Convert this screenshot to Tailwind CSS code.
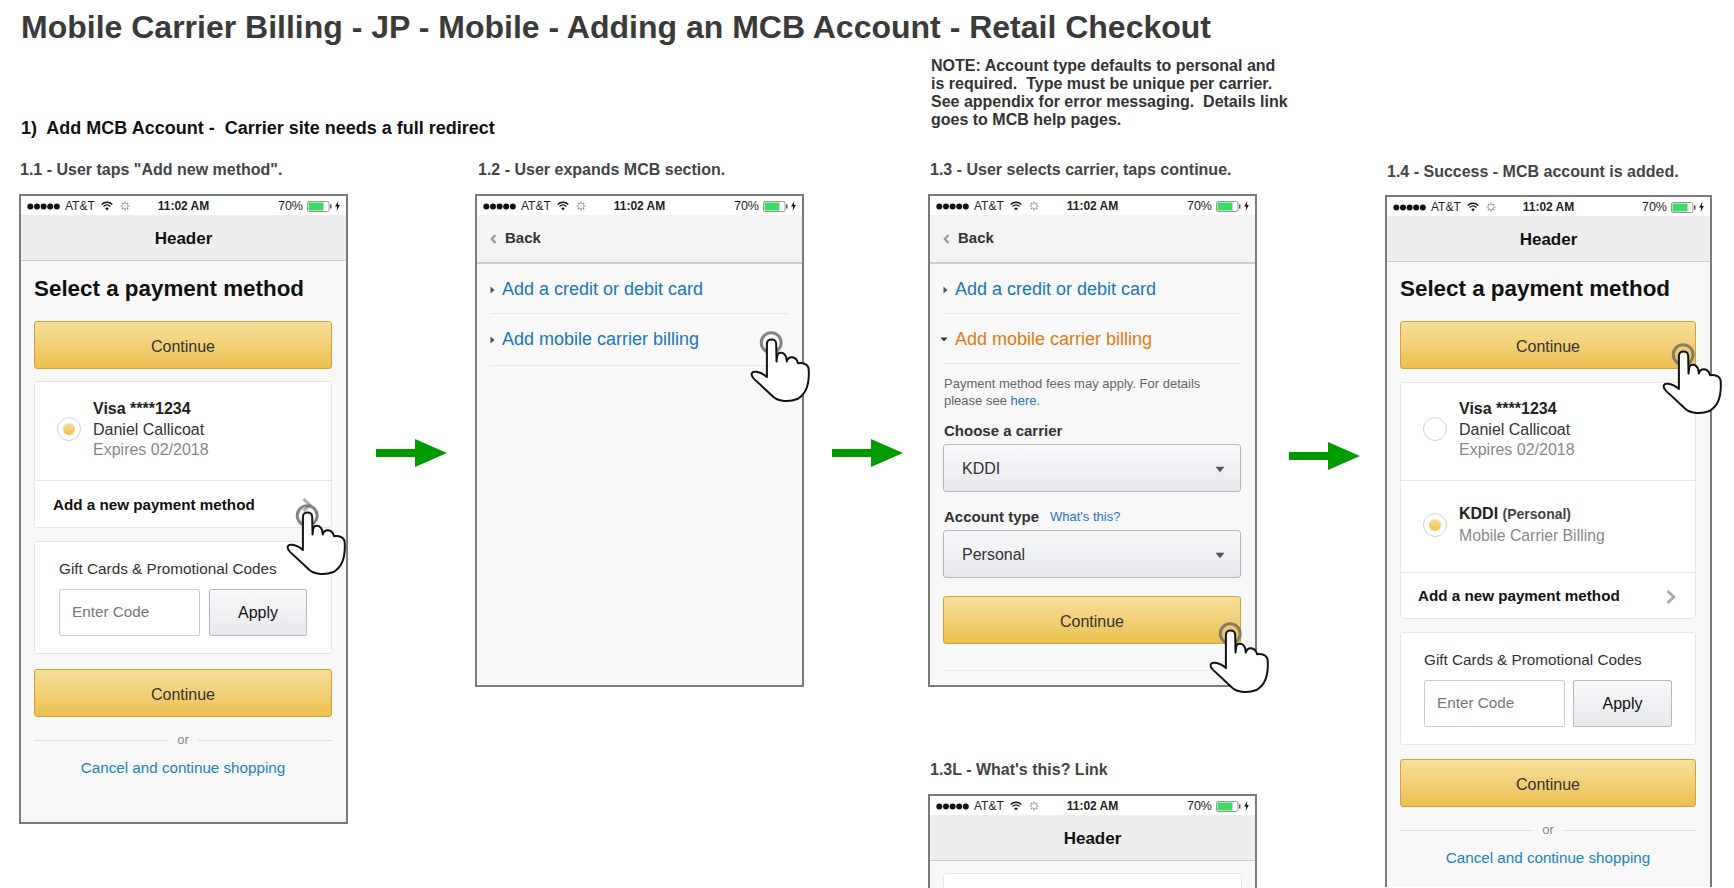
<!DOCTYPE html>
<html lang="en">
<head>
    <meta charset="utf-8">
    <title>Mobile Carrier Billing - JP</title>
    <script src="https://cdn.jsdelivr.net/npm/@tailwindcss/browser@4"></script>
</head>
<body class="h-[888px] overflow-hidden bg-white font-['Liberation_Sans',Arial,sans-serif] text-[#333]">
    <!-- shared icons -->
    <svg class="hidden">
        <symbol id="hand" viewBox="48 70 182 220">
            <circle cx="111" cy="108" r="30" fill="none" stroke="#6f6f6f" stroke-opacity="0.85" stroke-width="9"/>
            <path d="M98 192 L98 112 C98 94 126 94 126 112 L127 165 L129 148 C132 134 150 136 156 152 L158 165 C162 148 185 146 192 170 C205 168 224 172 224 190 C226 225 220 262 190 278 C165 288 135 286 118 272 L60 218 C46 204 52 194 66 196 C78 198 90 204 98 212 Z" fill="#fff" stroke="#111" stroke-width="6" stroke-linejoin="round"/>
        </symbol>
        <symbol id="dots" viewBox="0 0 33 7">
            <circle cx="3.3" cy="3.5" r="3" fill="#111"/><circle cx="10" cy="3.5" r="3" fill="#111"/><circle cx="16.6" cy="3.5" r="3" fill="#111"/><circle cx="23.2" cy="3.5" r="3" fill="#111"/><circle cx="29.8" cy="3.5" r="3" fill="#111"/>
        </symbol>
        <symbol id="wifi" viewBox="0 0 12 10">
            <path d="M0.7 3.4 C3.7 0.6 8.3 0.6 11.3 3.4 M2.6 5.4 C4.6 3.6 7.4 3.6 9.4 5.4" fill="none" stroke="#111" stroke-width="1.4"/>
            <path d="M4.2 7.2 C5.2 6.4 6.8 6.4 7.8 7.2 L6 9.4 Z" fill="#111"/>
        </symbol>
        <symbol id="spinner" viewBox="0 0 10 10">
            <path d="M5 0.5 V3 M5 7 V9.5 M0.5 5 H3 M7 5 H9.5 M1.8 1.8 L3.5 3.5 M6.5 6.5 L8.2 8.2 M8.2 1.8 L6.5 3.5 M3.5 6.5 L1.8 8.2" stroke="#888" stroke-width="1.2"/>
        </symbol>
        <symbol id="battery" viewBox="0 0 25 11">
            <rect x="0.5" y="0.5" width="21.5" height="10" rx="1.5" fill="#fff" stroke="#999"/>
            <rect x="1.5" y="1.5" width="15" height="8" fill="#3ddb65"/>
            <rect x="23" y="3.5" width="1.5" height="4" fill="#555"/>
        </symbol>
        <symbol id="bolt" viewBox="0 0 5 10">
            <path d="M3.2 0 L0.2 5.6 H2.2 L1.6 10 L4.8 4 H2.8 Z" fill="#111"/>
        </symbol>
        <symbol id="chevron" viewBox="0 0 10 14">
            <path d="M1.5 1 L8 7 L1.5 13" fill="none" stroke="#aaa" stroke-width="2.8"/>
        </symbol>
        <symbol id="back" viewBox="0 0 7 10">
            <path d="M5.5 1 L1.8 5 L5.5 9" fill="none" stroke="#999" stroke-width="2.2"/>
        </symbol>
        <symbol id="tri-right" viewBox="0 0 5 8">
            <path d="M0.5 0.5 L4.5 4 L0.5 7.5 Z" fill="#555"/>
        </symbol>
        <symbol id="tri-down" viewBox="0 0 8 5">
            <path d="M0.5 0.5 H7.5 L4 4.5 Z" fill="#333"/>
        </symbol>
        <symbol id="caret" viewBox="0 0 9 6">
            <path d="M0.5 0.5 H8.5 L4.5 5.5 Z" fill="#555"/>
        </symbol>
        <symbol id="arrow" viewBox="0 0 71 28">
            <path d="M0 10 H39 V0 L71 14 L39 28 V18 H0 Z" fill="#009b00"/>
        </symbol>
    </svg>

    <h1 class="h-[54px] pl-[21px] text-[32px] leading-[54px] font-bold whitespace-nowrap text-[#3a3a3a]">Mobile Carrier Billing - JP - Mobile - Adding an MCB Account - Retail Checkout</h1>

    <div class="flex items-start pl-[19px]">
        <!-- 1.1 -->
        <div class="flex w-[329px] shrink-0 flex-col">
            <h2 class="mt-[64px] ml-[2px] text-[18px] leading-[20px] font-bold whitespace-pre text-[#111]">1)  Add MCB Account -  Carrier site needs a full redirect</h2>
            <p class="mt-[22px] ml-[1px] text-[16px] leading-[20px] font-bold whitespace-nowrap text-[#444]">1.1 - User taps "Add new method".</p>
            <div class="relative mt-[14px] h-[630px] border-2 border-[#7b7b7b] bg-[#f8f8f8]">
                <div class="grid h-[19px] grid-cols-[1fr_auto_1fr] items-center bg-white px-[6px] text-[12px] leading-[19px] text-[#222]">
                    <div class="flex items-center"><svg class="h-[7px] w-[33px]"><use href="#dots"/></svg><span class="ml-[5px]">AT&amp;T</span><svg class="ml-[6px] h-[10px] w-[12px]"><use href="#wifi"/></svg><svg class="ml-[7px] h-[10px] w-[10px]"><use href="#spinner"/></svg></div>
                    <div class="font-bold">11:02 AM</div>
                    <div class="flex items-center justify-end"><span class="pt-[1px] text-[12.5px]">70%</span><svg class="ml-[4px] h-[11px] w-[25px]"><use href="#battery"/></svg><svg class="ml-[3px] h-[10px] w-[5px]"><use href="#bolt"/></svg></div>
                </div>
                <div class="flex h-[46px] items-center justify-center border-b border-[#ccc] bg-[#eee] pt-[2px] text-[17px] font-bold text-[#111]">Header</div>
                <div class="pr-[14px] pl-[13px]">
                    <h3 class="mt-[14px] text-[22.4px] leading-[28px] font-bold text-[#111]">Select a payment method</h3>
                    <div class="mt-[18px] flex h-[48px] items-center justify-center rounded-[3px] border border-[#cfa337] bg-linear-to-b from-[#f6df9a] to-[#edc04d] pt-[4px] text-[16px] text-[#333]">Continue</div>
                    <div class="mt-[12px] h-[147px] rounded-[3px] border border-[#e6e6e6] bg-white">
                        <div class="flex h-[99px] border-b border-[#e6e6e6] pt-[17px] pl-[22px]">
                            <div class="mt-[18px] flex h-[24px] w-[24px] items-center justify-center rounded-full border border-[#d0d0d0] bg-white"><div class="h-[12px] w-[12px] rounded-full bg-linear-to-b from-[#f6df9a] to-[#edc04d]"></div></div>
                            <div class="ml-[12px] text-[16px] leading-[20.5px]">
                                <div class="font-bold text-[#222]">Visa ****1234</div>
                                <div>Daniel Callicoat</div>
                                <div class="text-[#888]">Expires 02/2018</div>
                            </div>
                        </div>
                        <div class="flex h-[46px] items-center justify-between pt-[2px] pr-[19px] pl-[18px]">
                            <span class="text-[15.2px] font-bold text-[#111]">Add a new payment method</span>
                            <svg class="h-[14px] w-[10px]"><use href="#chevron"/></svg>
                        </div>
                    </div>
                    <div class="mt-[13px] h-[113px] rounded-[3px] border border-[#e6e6e6] bg-white pt-[17px] pl-[24px]">
                        <div class="text-[15.3px] leading-[20px] text-[#333]">Gift Cards &amp; Promotional Codes</div>
                        <div class="mt-[10px] flex gap-[9px]">
                            <div class="flex h-[47px] w-[141px] items-center rounded-[2px] border border-[#ccc] bg-white pl-[12px] text-[15.3px] text-[#777]">Enter Code</div>
                            <div class="flex h-[47px] w-[98px] items-center justify-center rounded-[2px] border border-[#b5b8be] bg-linear-to-b from-[#f7f8fa] to-[#e7e9ec] text-[16px] text-[#111]">Apply</div>
                        </div>
                    </div>
                    <div class="mt-[15px] flex h-[48px] items-center justify-center rounded-[3px] border border-[#cfa337] bg-linear-to-b from-[#f6df9a] to-[#edc04d] pt-[4px] text-[16px] text-[#333]">Continue</div>
                    <div class="mt-[15px] flex items-center gap-[9px] text-[13px] leading-[16px] text-[#888]"><div class="h-px flex-1 bg-[#ddd]"></div>or<div class="h-px flex-1 bg-[#ddd]"></div></div>
                    <div class="mt-[10px] text-center text-[15.2px] leading-[20px] text-[#1a83c1]">Cancel and continue shopping</div>
                </div>
                <svg class="absolute top-[307px] left-[265px] h-[73px] w-[61px]"><use href="#hand"/></svg>
            </div>
        </div>

        <svg class="mt-[385px] ml-[28px] h-[28px] w-[71px] shrink-0"><use href="#arrow"/></svg>

        <!-- 1.2 -->
        <div class="ml-[28px] flex w-[329px] shrink-0 flex-col">
            <p class="mt-[106px] ml-[3px] text-[16px] leading-[20px] font-bold whitespace-nowrap text-[#444]">1.2 - User expands MCB section.</p>
            <div class="relative mt-[14px] h-[493px] border-2 border-[#7b7b7b] bg-[#f8f8f8]">
                <div class="grid h-[19px] grid-cols-[1fr_auto_1fr] items-center bg-white px-[6px] text-[12px] leading-[19px] text-[#222]">
                    <div class="flex items-center"><svg class="h-[7px] w-[33px]"><use href="#dots"/></svg><span class="ml-[5px]">AT&amp;T</span><svg class="ml-[6px] h-[10px] w-[12px]"><use href="#wifi"/></svg><svg class="ml-[7px] h-[10px] w-[10px]"><use href="#spinner"/></svg></div>
                    <div class="font-bold">11:02 AM</div>
                    <div class="flex items-center justify-end"><span class="pt-[1px] text-[12.5px]">70%</span><svg class="ml-[4px] h-[11px] w-[25px]"><use href="#battery"/></svg><svg class="ml-[3px] h-[10px] w-[5px]"><use href="#bolt"/></svg></div>
                </div>
                <div class="flex h-[49px] items-center border-b-2 border-[#ccc] bg-[#f3f3f3] pl-[13px] text-[15px] font-bold text-[#333]"><svg class="h-[10px] w-[7px]"><use href="#back"/></svg><span class="ml-[8px]">Back</span></div>
                <div class="pr-[14px] pl-[13px]">
                    <div class="flex h-[50px] items-center border-b border-[#e6e6e6] pt-[2px] text-[18px] text-[#1a76bb]"><svg class="h-[8px] w-[5px]"><use href="#tri-right"/></svg><span class="ml-[7px]">Add a credit or debit card</span></div>
                    <div class="flex h-[52px] items-center border-b border-[#e6e6e6] text-[18px] text-[#1a76bb]"><svg class="h-[8px] w-[5px]"><use href="#tri-right"/></svg><span class="ml-[7px]">Add mobile carrier billing</span></div>
                </div>
                <svg class="absolute top-[134px] left-[273px] h-[73px] w-[61px]"><use href="#hand"/></svg>
            </div>
        </div>

        <svg class="mt-[385px] ml-[28px] h-[28px] w-[71px] shrink-0"><use href="#arrow"/></svg>

        <!-- 1.3 -->
        <div class="ml-[25px] flex w-[329px] shrink-0 flex-col">
            <p class="mt-[3px] ml-[3px] text-[16px] leading-[18px] font-bold whitespace-pre text-[#333]">NOTE: Account type defaults to personal and
is required.  Type must be unique per carrier.
See appendix for error messaging.  Details link
goes to MCB help pages.</p>
            <p class="mt-[31px] ml-[2px] text-[16px] leading-[20px] font-bold whitespace-nowrap text-[#444]">1.3 - User selects carrier, taps continue.</p>
            <div class="relative mt-[14px] h-[493px] border-2 border-[#7b7b7b] bg-[#f8f8f8]">
                <div class="grid h-[19px] grid-cols-[1fr_auto_1fr] items-center bg-white px-[6px] text-[12px] leading-[19px] text-[#222]">
                    <div class="flex items-center"><svg class="h-[7px] w-[33px]"><use href="#dots"/></svg><span class="ml-[5px]">AT&amp;T</span><svg class="ml-[6px] h-[10px] w-[12px]"><use href="#wifi"/></svg><svg class="ml-[7px] h-[10px] w-[10px]"><use href="#spinner"/></svg></div>
                    <div class="font-bold">11:02 AM</div>
                    <div class="flex items-center justify-end"><span class="pt-[1px] text-[12.5px]">70%</span><svg class="ml-[4px] h-[11px] w-[25px]"><use href="#battery"/></svg><svg class="ml-[3px] h-[10px] w-[5px]"><use href="#bolt"/></svg></div>
                </div>
                <div class="flex h-[49px] items-center border-b-2 border-[#ccc] bg-[#f3f3f3] pl-[13px] text-[15px] font-bold text-[#333]"><svg class="h-[10px] w-[7px]"><use href="#back"/></svg><span class="ml-[8px]">Back</span></div>
                <div class="pr-[14px] pl-[13px]">
                    <div class="flex h-[50px] items-center border-b border-[#e6e6e6] pt-[2px] text-[18px] text-[#1a76bb]"><svg class="h-[8px] w-[5px]"><use href="#tri-right"/></svg><span class="ml-[7px]">Add a credit or debit card</span></div>
                    <div class="flex h-[50px] items-center border-b border-[#e6e6e6] pt-[2px] text-[18px] text-[#e47911]"><svg class="-ml-[3px] h-[5px] w-[8px]"><use href="#tri-down"/></svg><span class="ml-[7px]">Add mobile carrier billing</span></div>
                    <p class="mt-[11px] pl-px text-[13px] leading-[17px] text-[#666]">Payment method fees may apply. For details<br>please see <span class="text-[#2a6fc9]">here</span>.</p>
                    <div class="mt-[12px] pl-px text-[15px] leading-[20px] font-bold text-[#333]">Choose a carrier</div>
                    <div class="mt-[3px] flex h-[48px] items-center justify-between rounded-[3px] border border-[#b5b8be] bg-linear-to-b from-[#f7f8fa] to-[#e7e9ec] pt-[2px] pr-[15px] pl-[18px] text-[16px] text-[#333]">KDDI<svg class="h-[7px] w-[10px]"><use href="#caret"/></svg></div>
                    <div class="mt-[15px] flex items-center pl-px leading-[20px]"><span class="text-[15px] font-bold text-[#333]">Account type</span><span class="ml-[11px] text-[13px] text-[#2a6fc9]">What's this?</span></div>
                    <div class="mt-[3px] flex h-[48px] items-center justify-between rounded-[3px] border border-[#b5b8be] bg-linear-to-b from-[#f7f8fa] to-[#e7e9ec] pt-[2px] pr-[15px] pl-[18px] text-[16px] text-[#333]">Personal<svg class="h-[7px] w-[10px]"><use href="#caret"/></svg></div>
                    <div class="mt-[18px] flex h-[48px] items-center justify-center rounded-[3px] border border-[#cfa337] bg-linear-to-b from-[#f6df9a] to-[#edc04d] pt-[3px] text-[16px] text-[#333]">Continue</div>
                    <div class="mt-[26px] h-px bg-[#e6e6e6]"></div>
                </div>
                <svg class="absolute top-[425px] left-[279px] h-[73px] w-[61px]"><use href="#hand"/></svg>
            </div>
            <p class="mt-[73px] ml-[2px] text-[16px] leading-[20px] font-bold whitespace-nowrap text-[#444]">1.3L - What's this? Link</p>
            <div class="mt-[14px] h-[120px] border-2 border-[#7b7b7b] bg-[#f8f8f8]">
                <div class="grid h-[19px] grid-cols-[1fr_auto_1fr] items-center bg-white px-[6px] text-[12px] leading-[19px] text-[#222]">
                    <div class="flex items-center"><svg class="h-[7px] w-[33px]"><use href="#dots"/></svg><span class="ml-[5px]">AT&amp;T</span><svg class="ml-[6px] h-[10px] w-[12px]"><use href="#wifi"/></svg><svg class="ml-[7px] h-[10px] w-[10px]"><use href="#spinner"/></svg></div>
                    <div class="font-bold">11:02 AM</div>
                    <div class="flex items-center justify-end"><span class="pt-[1px] text-[12.5px]">70%</span><svg class="ml-[4px] h-[11px] w-[25px]"><use href="#battery"/></svg><svg class="ml-[3px] h-[10px] w-[5px]"><use href="#bolt"/></svg></div>
                </div>
                <div class="flex h-[46px] items-center justify-center border-b border-[#ccc] bg-[#eee] pt-[2px] text-[17px] font-bold text-[#111]">Header</div>
                <div class="mx-[13px] mt-[12px] h-[60px] rounded-[3px] border border-[#e6e6e6] bg-white"></div>
            </div>
        </div>

        <svg class="mt-[388px] ml-[32px] h-[28px] w-[71px] shrink-0"><use href="#arrow"/></svg>

        <!-- 1.4 -->
        <div class="ml-[25px] flex w-[327px] shrink-0 flex-col">
            <p class="mt-[108px] ml-[2px] text-[16px] leading-[20px] font-bold whitespace-nowrap text-[#444]">1.4 - Success - MCB account is added.</p>
            <div class="relative mt-[13px] h-[692px] border-x-2 border-t-2 border-[#7b7b7b] bg-[#f8f8f8]">
                <div class="grid h-[19px] grid-cols-[1fr_auto_1fr] items-center bg-white px-[6px] text-[12px] leading-[19px] text-[#222]">
                    <div class="flex items-center"><svg class="h-[7px] w-[33px]"><use href="#dots"/></svg><span class="ml-[5px]">AT&amp;T</span><svg class="ml-[6px] h-[10px] w-[12px]"><use href="#wifi"/></svg><svg class="ml-[7px] h-[10px] w-[10px]"><use href="#spinner"/></svg></div>
                    <div class="font-bold">11:02 AM</div>
                    <div class="flex items-center justify-end"><span class="pt-[1px] text-[12.5px]">70%</span><svg class="ml-[4px] h-[11px] w-[25px]"><use href="#battery"/></svg><svg class="ml-[3px] h-[10px] w-[5px]"><use href="#bolt"/></svg></div>
                </div>
                <div class="flex h-[46px] items-center justify-center border-b border-[#ccc] bg-[#eee] pt-[2px] text-[17px] font-bold text-[#111]">Header</div>
                <div class="pr-[14px] pl-[13px]">
                    <h3 class="mt-[13px] text-[22.4px] leading-[28px] font-bold text-[#111]">Select a payment method</h3>
                    <div class="mt-[18px] flex h-[48px] items-center justify-center rounded-[3px] border border-[#cfa337] bg-linear-to-b from-[#f6df9a] to-[#edc04d] pt-[3px] text-[16px] text-[#333]">Continue</div>
                    <div class="mt-[13px] h-[237px] rounded-[3px] border border-[#e6e6e6] bg-white">
                        <div class="flex h-[98px] border-b border-[#e6e6e6] pt-[16px] pl-[22px]">
                            <div class="mt-[18px] h-[24px] w-[24px] rounded-full border border-[#d0d0d0] bg-white"></div>
                            <div class="ml-[12px] text-[16px] leading-[20.5px]">
                                <div class="font-bold text-[#222]">Visa ****1234</div>
                                <div>Daniel Callicoat</div>
                                <div class="text-[#888]">Expires 02/2018</div>
                            </div>
                        </div>
                        <div class="flex h-[92px] items-center border-b border-[#e6e6e6] pb-[4px] pl-[22px]">
                            <div class="flex h-[24px] w-[24px] items-center justify-center rounded-full border border-[#d0d0d0] bg-white"><div class="h-[12px] w-[12px] rounded-full bg-linear-to-b from-[#f6df9a] to-[#edc04d]"></div></div>
                            <div class="ml-[12px]">
                                <div class="text-[16px] leading-[22px] font-bold text-[#222]">KDDI <span class="text-[14px] text-[#444]">(Personal)</span></div>
                                <div class="text-[15.8px] leading-[22px] text-[#888]">Mobile Carrier Billing</div>
                            </div>
                        </div>
                        <div class="flex h-[45px] items-center justify-between pt-[2px] pr-[19px] pl-[17px]">
                            <span class="text-[15.2px] font-bold text-[#111]">Add a new payment method</span>
                            <svg class="h-[14px] w-[10px]"><use href="#chevron"/></svg>
                        </div>
                    </div>
                    <div class="mt-[13px] h-[113px] rounded-[3px] border border-[#e6e6e6] bg-white pt-[17px] pl-[23px]">
                        <div class="text-[15.3px] leading-[20px] text-[#333]">Gift Cards &amp; Promotional Codes</div>
                        <div class="mt-[10px] flex gap-[8px]">
                            <div class="flex h-[47px] w-[141px] items-center rounded-[2px] border border-[#ccc] bg-white pl-[12px] text-[15.3px] text-[#777]">Enter Code</div>
                            <div class="flex h-[47px] w-[99px] items-center justify-center rounded-[2px] border border-[#b5b8be] bg-linear-to-b from-[#f7f8fa] to-[#e7e9ec] text-[16px] text-[#111]">Apply</div>
                        </div>
                    </div>
                    <div class="mt-[14px] flex h-[48px] items-center justify-center rounded-[3px] border border-[#cfa337] bg-linear-to-b from-[#f6df9a] to-[#edc04d] pt-[3px] text-[16px] text-[#333]">Continue</div>
                    <div class="mt-[15px] flex items-center gap-[9px] text-[13px] leading-[16px] text-[#888]"><div class="h-px flex-1 bg-[#ddd]"></div>or<div class="h-px flex-1 bg-[#ddd]"></div></div>
                    <div class="mt-[10px] text-center text-[15.2px] leading-[20px] text-[#1a83c1]">Cancel and continue shopping</div>
                </div>
                <svg class="absolute top-[145px] left-[275px] h-[73px] w-[61px]"><use href="#hand"/></svg>
            </div>
        </div>
    </div>
</body>
</html>
